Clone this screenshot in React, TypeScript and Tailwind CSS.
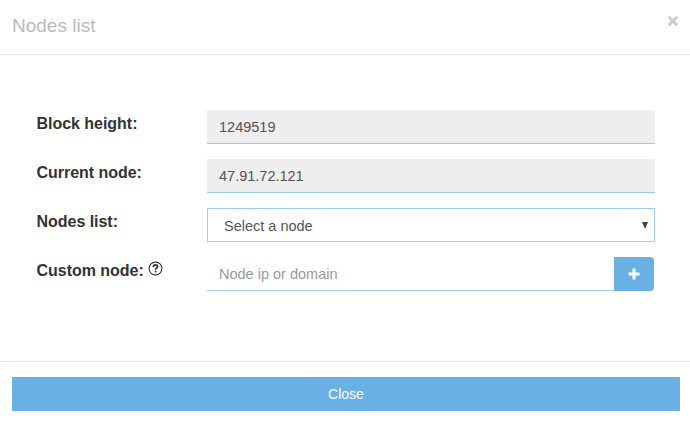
import type { ReactNode } from "react";

function Row({ label, children }: { label: ReactNode; children: ReactNode }) {
  return (
    <div className="flex h-[34px]">
      <div className="flex w-[170.5px] shrink-0 items-start pt-[2px] text-[16px] leading-[23px] font-bold tracking-[-0.03px] text-[#333]">
        {label}
      </div>
      {children}
    </div>
  );
}

function ReadOnly({ value }: { value: string }) {
  return (
    <div className="w-[448px] border-b border-[#9bcbec] bg-[#eee] pl-3 text-[14.5px] leading-[34px] text-[#555]">
      {value}
    </div>
  );
}

export default function App() {
  return (
    <div className="flex h-[423px] w-[690px] flex-col bg-white font-['Liberation_Sans',Arial,sans-serif]">
      <header className="flex h-[55px] shrink-0 justify-between border-b border-[#e5e5e5] pr-[11px] pl-3">
        <h1 className="pt-[13px] text-[19px] leading-[26px] font-normal text-[#bbb]">Nodes list</h1>
        <button aria-label="Dismiss" className="flex h-[41px] items-center">
          <svg width="12" height="12" viewBox="0 0 12 12" stroke="#ccc" strokeWidth="3">
            <path d="M1.7 1.7 10.3 10.3M10.3 1.7 1.7 10.3" />
          </svg>
        </button>
      </header>
      <main className="flex h-[306px] shrink-0 flex-col gap-[15px] pt-[55px] pl-[36.5px]">
        <Row label="Block height:"><ReadOnly value="1249519" /></Row>
        <Row label="Current node:"><ReadOnly value="47.91.72.121" /></Row>
        <Row label="Nodes list:">
          <div className="flex w-[448px] justify-between border border-[#9fcfeb] pr-[6px] pl-4 text-[14.5px] leading-[34px] text-[#555]">
            <span>Select a node</span>
            <svg className="mt-[13px]" width="6" height="6" viewBox="0 0 6 6" fill="#444">
              <path d="M0 0H6L3.5 6H2.5Z" />
            </svg>
          </div>
        </Row>
        <Row
          label={
            <>
              Custom node:
              <svg className="mt-[2px] ml-[4.5px]" width="15" height="15" viewBox="0 0 15 15" fill="none" stroke="#333">
                <circle cx="7.5" cy="7.5" r="6.4" strokeWidth="1.1" />
                <path d="M5.3 6V5.7C5.4 3.3 9.6 3.3 9.6 5.6C9.6 7.1 7.6 7 7.6 8.8" strokeWidth="1.7" />
                <path d="M7.6 9.8V11.4" strokeWidth="1.8" />
              </svg>
            </>
          }
        >
          <input
            placeholder="Node ip or domain"
            className="h-[34px] w-[407px] border-b border-[#9fcfeb] px-3 text-[14.5px] text-[#555] outline-none placeholder:text-[#999]"
          />
          <button aria-label="Add node" className="flex h-[34px] w-10 items-center justify-center rounded-r-[4px] bg-[#69b0e5]">
            <svg width="12" height="12" viewBox="0 0 12 12" stroke="#fff" strokeWidth="3">
              <path d="M6 .5V11.5M.5 6H11.5" />
            </svg>
          </button>
        </Row>
      </main>
      <footer className="border-t border-[#e5e5e5] pt-[15px] pr-[10px] pl-3">
        <button className="block h-[34px] w-full bg-[#69b0e5] text-[14px] leading-[34px] text-white">Close</button>
      </footer>
    </div>
  );
}
